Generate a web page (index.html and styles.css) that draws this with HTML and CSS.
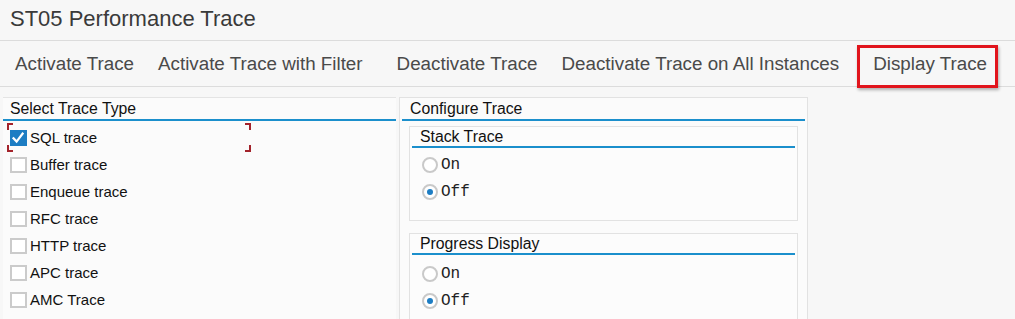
FILE: index.html
```html
<!DOCTYPE html>
<html lang="en">
<head>
<meta charset="utf-8">
<title>ST05 Performance Trace</title>
<link rel="stylesheet" href="styles.css">
</head>
<body>
<header class="titlebar">ST05 Performance Trace</header>
<nav class="toolbar">
  <span class="tb-btn">Activate Trace</span>
  <span class="tb-btn">Activate Trace with Filter</span>
  <span class="tb-btn group-start">Deactivate Trace</span>
  <span class="tb-btn">Deactivate Trace on All Instances</span>
  <span class="tb-btn group-start highlighted">Display Trace</span>
</nav>
<main class="content">
  <section class="panel left-panel">
    <h2 class="panel-title">Select Trace Type</h2>
    <ul class="check-list">
      <li class="check-row focused">
        <span class="checkbox checked"><svg viewBox="0 0 16 16" width="16" height="16"><path d="M3.5 8.2 L6.6 11.6 L12.6 3.6" fill="none" stroke="#fff" stroke-width="2.2" stroke-linecap="square"/></svg></span>
        <span class="check-label">SQL trace</span>
        <span class="focus-frame"><i class="c tl"></i><i class="c tr"></i><i class="c bl"></i><i class="c br"></i></span>
      </li>
      <li class="check-row"><span class="checkbox"></span><span class="check-label">Buffer trace</span></li>
      <li class="check-row"><span class="checkbox"></span><span class="check-label">Enqueue trace</span></li>
      <li class="check-row"><span class="checkbox"></span><span class="check-label">RFC trace</span></li>
      <li class="check-row"><span class="checkbox"></span><span class="check-label">HTTP trace</span></li>
      <li class="check-row"><span class="checkbox"></span><span class="check-label">APC trace</span></li>
      <li class="check-row"><span class="checkbox"></span><span class="check-label">AMC Trace</span></li>
    </ul>
  </section>
  <section class="panel right-panel">
    <h2 class="panel-title">Configure Trace</h2>
    <div class="subpanel stack">
      <h3 class="sub-title">Stack Trace</h3>
      <div class="radio-row"><span class="radio"></span><span class="radio-label">On</span></div>
      <div class="radio-row"><span class="radio selected"></span><span class="radio-label">Off</span></div>
    </div>
    <div class="subpanel progress">
      <h3 class="sub-title">Progress Display</h3>
      <div class="radio-row"><span class="radio"></span><span class="radio-label">On</span></div>
      <div class="radio-row"><span class="radio selected"></span><span class="radio-label">Off</span></div>
    </div>
  </section>
</main>
</body>
</html>
```

FILE: styles.css
```css
* { box-sizing: border-box; }
html, body {
  margin: 0;
  padding: 0;
  background: #f7f7f7;
  font-family: "Liberation Sans", Arial, sans-serif;
  overflow: hidden;
}
.titlebar {
  height: 41px;
  padding: 5px 0 0 10px;
  font-size: 22px;
  line-height: 28px;
  color: #3a3a3a;
  border-bottom: 1px solid #dcdcdc;
}
.toolbar {
  height: 46px;
  display: flex;
  align-items: center;
  padding-left: 3px;
  border-bottom: 1px solid #dcdcdc;
}
.tb-btn {
  padding: 0 12px;
  font-size: 18.8px;
  line-height: 40px;
  color: #4a4a4a;
  white-space: nowrap;
}
.tb-btn.group-start { margin-left: 10px; }
.tb-btn.highlighted {
  align-self: flex-start;
  margin-top: 4px;
  margin-left: 6px;
  padding: 0 11px 5px 16px;
  line-height: 38px;
  outline: 3px solid #e1141c;
  outline-offset: -3px;
  box-shadow: 1px 2px 3px rgba(0,0,0,0.3);
}
.content {
  display: flex;
  align-items: flex-start;
  gap: 3px;
  padding: 10px 0 0 3px;
}
.panel {
  background: #fbfbfb;
}
.panel-title {
  margin: 0;
  font-weight: normal;
  font-size: 15.8px;
  line-height: 21px;
  color: #111;
  border-bottom: 2px solid #1b8fcc;
}
.left-panel {
  width: 393px;
  height: 240px;
  border-top: 1px solid #e4e4e4;
}
.left-panel .panel-title { padding-left: 7px; }
.check-list {
  list-style: none;
  margin: 0;
  padding: 3px 0 0 7px;
}
.check-row {
  position: relative;
  display: flex;
  align-items: center;
  height: 27px;
}
.checkbox {
  width: 17px;
  height: 16px;
  border: 2px solid #cbcbcb;
  background: #fff;
  display: inline-flex;
}
.checkbox.checked {
  background: #1d7dc3;
  border-color: #1d7dc3;
}
.checkbox.checked svg { margin: -2px; }
.check-label {
  margin-left: 3px;
  font-size: 15px;
  color: #111;
}
.focus-frame {
  position: absolute;
  left: -3px;
  top: -1px;
  width: 244px;
  height: 29px;
}
.focus-frame .c {
  position: absolute;
  width: 6px;
  height: 7px;
  border-color: #a3232b;
  border-style: solid;
  border-width: 0;
}
.c.tl { left: 0; top: 0; border-left-width: 2px; border-top-width: 2px; }
.c.tr { right: 0; top: 0; border-right-width: 2px; border-top-width: 2px; }
.c.bl { left: 0; bottom: 0; border-left-width: 2px; border-bottom-width: 2px; }
.c.br { right: 0; bottom: 0; border-right-width: 2px; border-bottom-width: 2px; }
.right-panel {
  width: 409px;
  height: 240px;
  border: 1px solid #e2e2e2;
}
.right-panel .panel-title {
  margin: 0 2px;
  padding-left: 8px;
}
.subpanel {
  margin: 5px 0 0 9px;
  width: 389px;
  border: 1px solid #e2e2e2;
  background: #fcfcfc;
}
.subpanel.stack { padding-bottom: 15px; }
.subpanel.progress { margin-top: 12px; height: 100px; }
.sub-title {
  margin: 0 2px;
  padding-left: 8px;
  font-weight: normal;
  font-size: 15.8px;
  line-height: 19px;
  color: #111;
  border-bottom: 2px solid #1b8fcc;
}
.radio-row {
  display: flex;
  align-items: center;
  height: 27px;
  padding-left: 12px;
}
.stack .radio-row:first-of-type { margin-top: 3px; }
.progress .radio-row:first-of-type { margin-top: 5px; }
.radio {
  width: 16px;
  height: 16px;
  border-radius: 50%;
  border: 2px solid #c9c9c9;
  background: #fff;
  display: inline-flex;
  align-items: center;
  justify-content: center;
}
.radio.selected::after {
  content: "";
  width: 6px;
  height: 6px;
  border-radius: 50%;
  background: #1d7dc3;
}
.radio-label {
  margin-left: 3px;
  font-family: "Liberation Mono", "DejaVu Sans Mono", monospace;
  font-size: 16px;
  color: #222;
}
```
